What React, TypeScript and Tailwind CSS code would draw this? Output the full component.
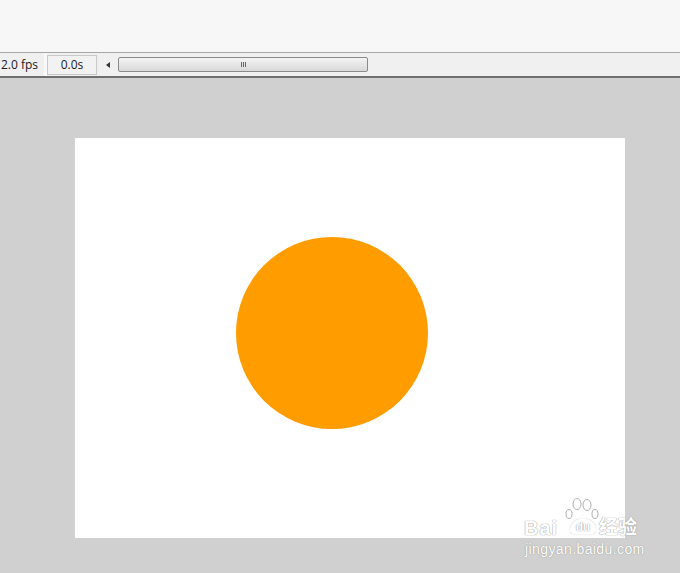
import React from 'react';

const Toolbar: React.FC = () => (
    <div className="h-[26px] flex items-center bg-[#f0f0f0] border-t border-[#a7a7a7] border-b-2 border-b-[#6f6f6f] text-[12px] text-[#1a1a1a] font-['Open_Sans',sans-serif]">
        <div className="w-[44px] h-full flex items-center justify-end pr-[6px] whitespace-nowrap overflow-hidden">2.0 fps</div>
        <div className="w-[3px] h-full bg-[#fafafa]" />
        <div className="w-[50px] h-[20px] border border-[#c8c8c8] bg-[#f2f2f2] flex items-center justify-center">0.0s</div>
        <div className="w-[21px] flex items-center justify-center">
            <svg width="4" height="6" viewBox="0 0 4 6"><path d="M4 0 L0 3 L4 6 Z" fill="#333" /></svg>
        </div>
        <div className="w-[250px] h-[15px] rounded-[2px] border border-[#8a8a8a] bg-gradient-to-b from-[#f4f4f4] to-[#d8d8d8] flex items-center justify-center">
            <span className="flex gap-[1px]">
                <span className="w-px h-[5px] bg-[#666]" />
                <span className="w-px h-[5px] bg-[#666]" />
                <span className="w-px h-[5px] bg-[#666]" />
            </span>
        </div>
        <div className="flex-1" />
    </div>
);

// faint Baidu jingyan watermark laid over the bottom right corner
const Watermark: React.FC = () => (
    <div className="absolute left-[523px] top-[497px] w-[124px] h-[62px] text-white font-['Liberation_Sans',sans-serif] pointer-events-none [text-shadow:0_0_1px_#9a9a9a,0_0_1px_#9a9a9a]">
        <span className="absolute left-[1px] top-[21px] text-[20px] leading-none font-bold tracking-[1px]">Bai</span>
        <svg className="absolute left-[41px] top-0" width="36" height="26" viewBox="0 0 36 26" fill="white" stroke="#b0b0b0" strokeWidth="1">
            <ellipse cx="5" cy="17" rx="3" ry="4.5" />
            <ellipse cx="13" cy="7" rx="4" ry="5.5" />
            <ellipse cx="23" cy="8" rx="4" ry="5.5" />
            <ellipse cx="31" cy="17" rx="3" ry="4.5" />
        </svg>
        <div className="absolute left-[47px] top-[22px] w-[26px] h-[15px] rounded-t-[11px] rounded-b-[4px] border-[1.5px] border-white shadow-[0_0_1px_#9a9a9a] flex items-center justify-center">
            <span className="text-[12px] leading-none font-bold">du</span>
        </div>
        <span className="absolute left-[76px] top-[19px] text-[19px] leading-none font-['Noto_Sans_CJK_SC',sans-serif] font-bold">经验</span>
        <span className="absolute left-[2px] top-[45px] text-[14px] leading-none whitespace-nowrap tracking-[0.4px]">jingyan.baidu.com</span>
    </div>
);

const App: React.FC = () => {
    return (
        <div className="relative w-[680px] h-[573px] overflow-hidden bg-[#d0d0d0]">
            <div className="h-[52px] bg-[#f7f7f7]" />
            <Toolbar />
            <div className="pt-[60px] pl-[75px]">
                <div className="w-[550px] h-[400px] bg-white flex items-center justify-center">
                    <div className="w-[192px] h-[192px] rounded-full bg-[#ff9c00] mt-[-11px] ml-[-36px]" />
                </div>
            </div>
            <Watermark />
        </div>
    );
};

export default App;
